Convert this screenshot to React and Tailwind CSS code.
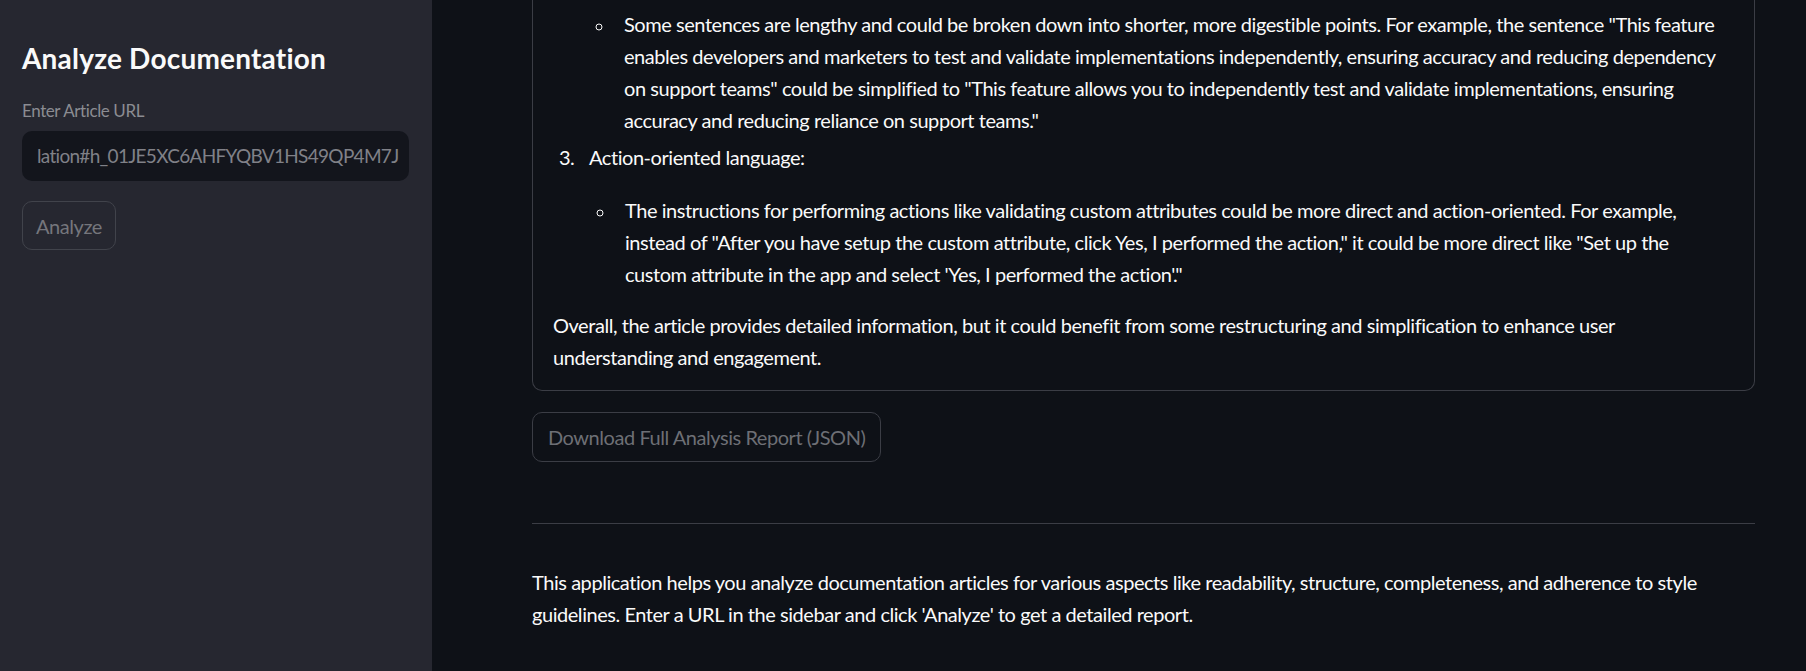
const font = { fontFamily: '"Lato", "Liberation Sans", sans-serif' };

const Sidebar = () => (
    <aside className="w-[432px] shrink-0 bg-[#262730] px-[22px] pt-[36px]">
        <h1 className="text-[28px] font-bold leading-[44px] text-[#fafafa] tracking-[0.2px]">
            Analyze Documentation
        </h1>
        <label className="mt-[19px] block text-[17px] leading-[24px] tracking-[-0.4px] text-[#8b8c92]">
            Enter Article URL
        </label>
        <div className="mt-[8px] h-[50px] w-[387px] rounded-[10px] bg-[#13151c] px-[15px] flex items-center overflow-hidden">
            <span className="whitespace-nowrap text-[19px] tracking-[-0.7px] text-[#808188]">
                lation#h_01JE5XC6AHFYQBV1HS49QP4M7J
            </span>
        </div>
        <button className="mt-[20px] h-[49px] rounded-[10px] border border-[#41434b] px-[13px] text-[20px] tracking-[-0.45px] text-[#75767c]">
            Analyze
        </button>
    </aside>
);

const Main = () => (
    <main className="flex-1 bg-[#0e1117] pl-[100px] pr-[51px] text-[#fafafa] text-[20px] leading-[32px] tracking-[-0.45px]">
        {/* result card, scrolled so only its lower part shows */}
        <div className="rounded-b-[10px] border border-t-0 border-[#3b3d45] pl-[20px] pr-[20px] pt-[8px] pb-[17px]">
            <ul className="ml-[61px] list-[circle] marker:text-[17px]">
                <li className="pl-[10px]">
                    Some sentences are lengthy and could be broken down into shorter, more digestible points. For example, the sentence "This feature enables developers and marketers to test and validate implementations independently, ensuring accuracy and reducing dependency on support teams" could be simplified to "This feature allows you to independently test and validate implementations, ensuring accuracy and reducing reliance on support teams."
                </li>
            </ul>
            <ol start={3} className="mt-[5px] ml-[26px] list-decimal">
                <li className="pl-[10px]">
                    <p>Action-oriented language:</p>
                    <ul className="mt-[21px] ml-[26px] list-[circle] marker:text-[17px]">
                        <li className="pl-[10px]">
                            The instructions for performing actions like validating custom attributes could be more direct and action-oriented. For example, instead of "After you have setup the custom attribute, click Yes, I performed the action," it could be more direct like "Set up the custom attribute in the app and select 'Yes, I performed the action'."
                        </li>
                    </ul>
                </li>
            </ol>
            <p className="mt-[19px]">
                Overall, the article provides detailed information, but it could benefit from some restructuring and simplification to enhance user understanding and engagement.
            </p>
        </div>
        <button className="mt-[21px] h-[50px] rounded-[10px] border border-[#3b3d45] px-[15px] text-[20px] text-[#6d6f75]">
            Download Full Analysis Report (JSON)
        </button>
        <hr className="mt-[61px] border-t border-[#3b3d45]" />
        <p className="mt-[42px]">
            This application helps you analyze documentation articles for various aspects like readability, structure, completeness, and adherence to style guidelines. Enter a URL in the sidebar and click 'Analyze' to get a detailed report.
        </p>
    </main>
);

export default function App() {
    return (
        <div className="flex h-[671px] w-[1806px] overflow-hidden" style={font}>
            <Sidebar />
            <Main />
        </div>
    );
}
